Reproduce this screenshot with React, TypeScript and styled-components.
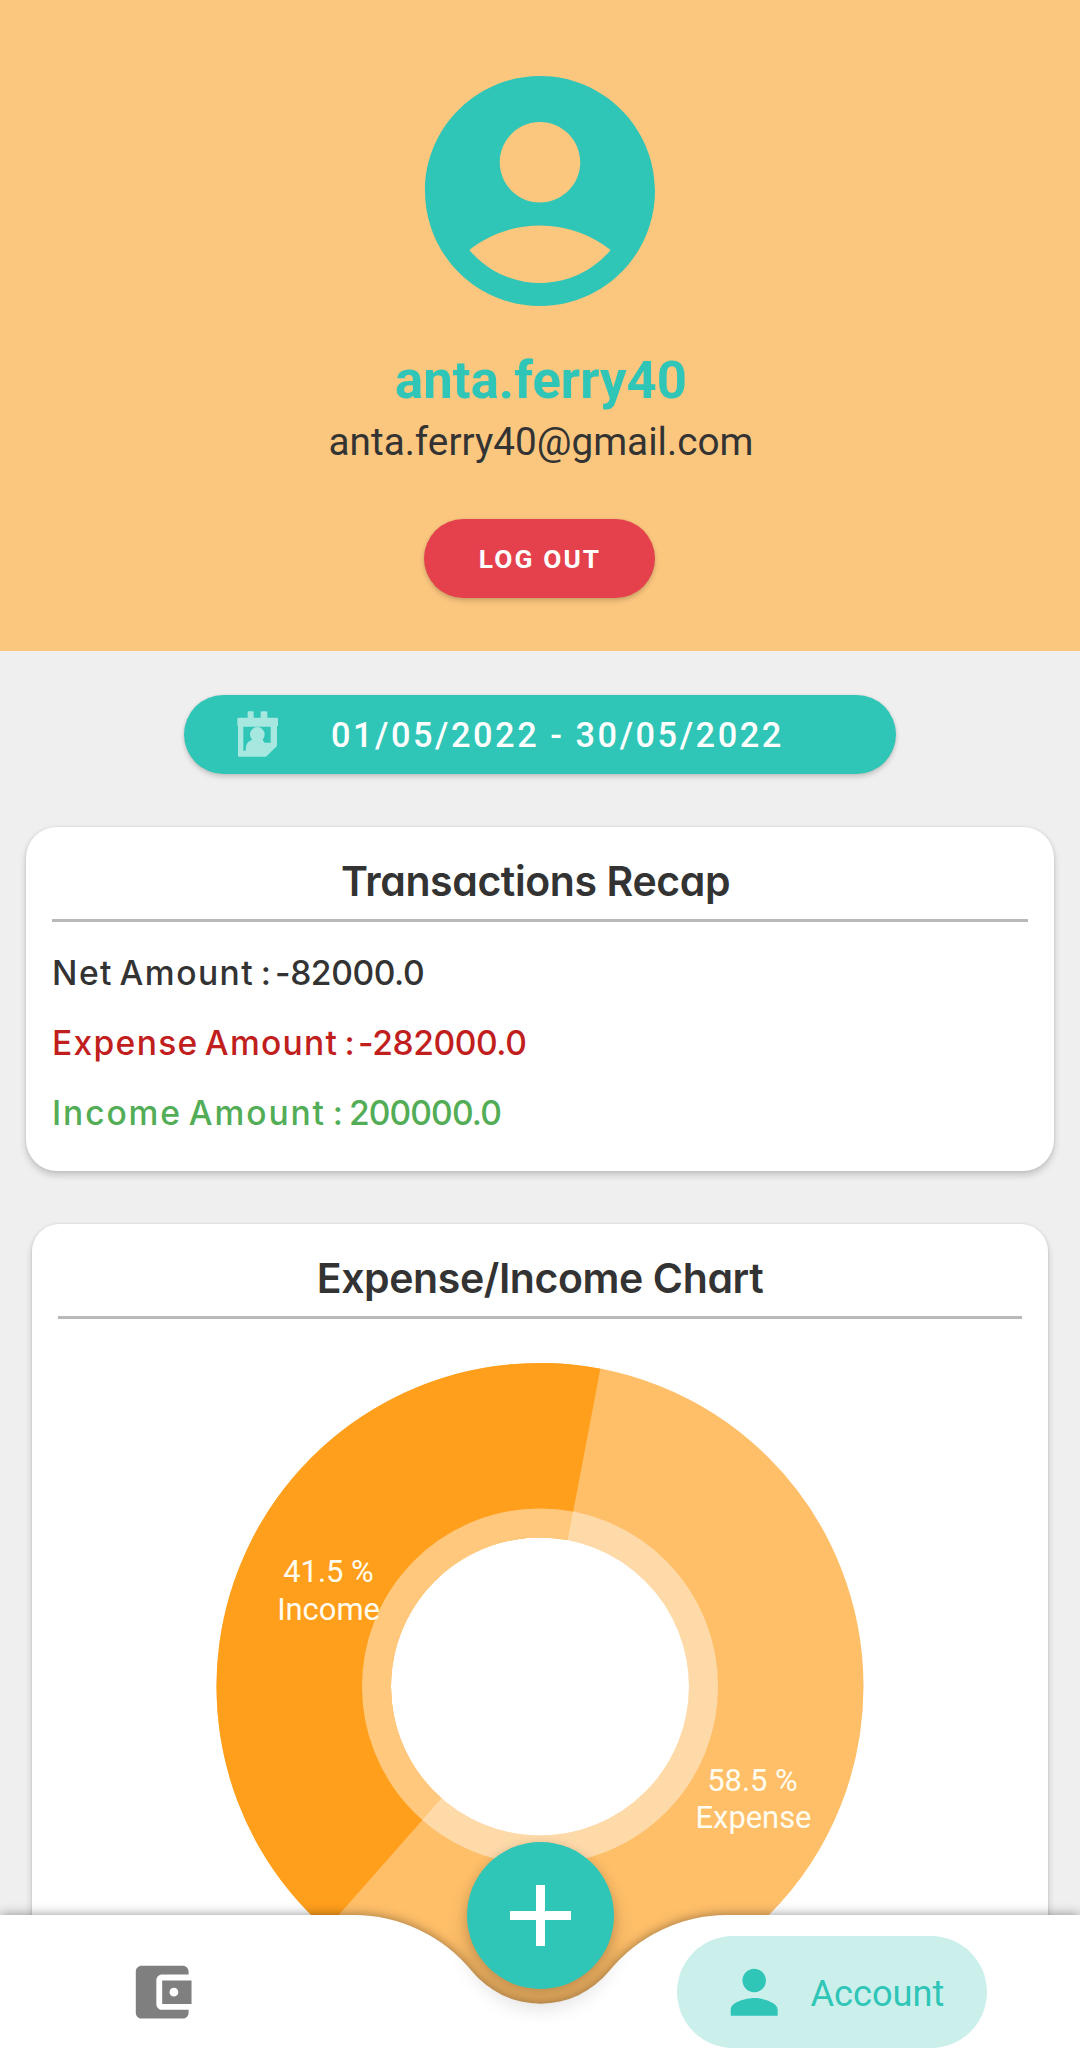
import React from "react";
import styled, { createGlobalStyle } from "styled-components";

const teal = "#2fc5b7";
const ink = "#333333";

const GlobalStyle = createGlobalStyle`
  html, body { margin: 0; padding: 0; }
  body { background: #efefef; font-family: Roboto, "Liberation Sans", sans-serif; }
`;

const Screen = styled.div`
  position: relative;
  display: flex;
  flex-direction: column;
  align-items: center;
  width: 1080px;
  height: 2069px;
  overflow: hidden;
  background: #efefef;
`;

const Header = styled.header`
  display: flex;
  flex-direction: column;
  align-items: center;
  flex: none;
  box-sizing: border-box;
  width: 100%;
  height: 651px;
  padding-top: 53px;
  background: #fbc77f;
`;

const Avatar = styled.svg`
  width: 276px;
  height: 276px;
  fill: ${teal};
`;

const UserName = styled.h1`
  margin: 20px 0 0;
  padding-left: 2px;
  font-size: 52.7px;
  line-height: 62px;
  font-weight: 700;
  color: ${teal};
`;

const Email = styled.p`
  margin: 8px 0 0;
  padding-left: 2px;
  font-size: 38.7px;
  line-height: 46px;
  color: ${ink};
`;

const PillButton = styled.button`
  display: flex;
  align-items: center;
  justify-content: center;
  flex: none;
  box-sizing: border-box;
  border: 0;
  height: 79px;
  border-radius: 40px;
  color: #fff;
  font-family: inherit;
  box-shadow: 0 3px 5px rgba(0, 0, 0, 0.17), 0 0 3px rgba(0, 0, 0, 0.08);
`;

const LogoutButton = styled(PillButton)`
  width: 231px;
  margin: 54px 1px 0 0;
  padding-left: 7px;
  background: #e5414d;
  font-size: 26.3px;
  font-weight: 700;
  letter-spacing: 2.1px;
`;

const DateButton = styled(PillButton)`
  justify-content: flex-start;
  width: 712px;
  margin-top: 44px;
  padding-left: 53px;
  gap: 52px;
  background: ${teal};
  font-size: 34.3px;
  font-weight: 500;
  letter-spacing: 2.55px;
`;

const CalendarIcon = styled.svg`
  width: 42px;
  height: 48px;
  margin-bottom: 2px;
  fill: #a6e8e0;
`;

const Card = styled.section<{ $width: number; $height: number; $gap: number; $radius: number }>`
  flex: none;
  box-sizing: border-box;
  width: ${(p) => p.$width}px;
  height: ${(p) => p.$height}px;
  margin-top: ${(p) => p.$gap}px;
  padding: 0 26px;
  border-radius: ${(p) => p.$radius}px;
  background: #fff;
  color: ${ink};
  font-family: Inter, Roboto, sans-serif;
  font-feature-settings: "cv11";
  box-shadow: 0 4px 7px rgba(0, 0, 0, 0.19), 0 0 3px rgba(0, 0, 0, 0.09);
`;

const CardTitle = styled.h2<{ $shift: number }>`
  box-sizing: border-box;
  height: 95px;
  margin: 0;
  padding-top: 29px;
  padding-right: ${(p) => p.$shift}px;
  border-bottom: 3px solid #b9b9b9;
  font-size: 41px;
  line-height: 50px;
  font-weight: 600;
  letter-spacing: -0.4px;
  text-align: center;
`;

const AmountList = styled.div`
  display: flex;
  flex-direction: column;
  padding-top: 16px;
`;

const Amount = styled.div<{ $color: string }>`
  display: flex;
  font-size: 33.6px;
  line-height: 70px;
  font-weight: 500;
  white-space: nowrap;
  color: ${(p) => p.$color};
`;

const AmountLabel = styled.span<{ $width: number; $tracking: number }>`
  width: ${(p) => p.$width}px;
  letter-spacing: ${(p) => p.$tracking}px;
  word-spacing: -4px;
`;

const AmountValue = styled.span<{ $tracking: number }>`
  letter-spacing: ${(p) => p.$tracking}px;
`;

const Donut = styled.svg`
  display: block;
  width: 648px;
  height: 648px;
  margin: 43px auto 0;
  font-family: Roboto, sans-serif;
  font-size: 30.9px;
  font-feature-settings: normal;
  fill: #fffdf0;
`;

const BottomBar = styled.nav`
  position: absolute;
  left: 0;
  right: 0;
  bottom: 0;
  height: 154px;
`;

const BarShadow = styled.div`
  position: absolute;
  inset: 0;
  filter: drop-shadow(0 0 6px rgba(0, 0, 0, 0.42));
`;

const BarShape = styled.div`
  height: 100%;
  background: #fff;
  clip-path: path("M0 0H353A153 153 0 0 1 472 56.2A88.5 88.5 0 0 0 609 56.2A153 153 0 0 1 728 0H1080V154H0Z");
`;

const BarItems = styled.div`
  position: relative;
  display: flex;
  align-items: center;
  justify-content: space-between;
  box-sizing: border-box;
  height: 100%;
  padding: 0 93px 0 127px;
`;

const NavIcon = styled.svg<{ $color: string }>`
  width: 70.4px;
  height: 70.4px;
  fill: ${(p) => p.$color};
`;

const ActiveTab = styled.div`
  display: flex;
  align-items: center;
  box-sizing: border-box;
  width: 310px;
  height: 112px;
  padding-left: 42px;
  gap: 21px;
  border-radius: 56px;
  background: #cbf0ec;
  color: ${teal};
  font-size: 36.2px;
`;

const TabLabel = styled.span`
  padding-top: 2px;
`;

const AddButton = styled.button`
  position: absolute;
  left: 467px;
  top: -73px;
  display: flex;
  align-items: center;
  justify-content: center;
  width: 147px;
  height: 147px;
  padding: 0;
  border: 0;
  border-radius: 50%;
  background: ${teal};
  box-shadow: 0 16px 22px rgba(0, 0, 0, 0.16), 0 2px 12px rgba(0, 0, 0, 0.14);
`;

const C = 324;
const OUTER = 323.5;
const RING = 178;
const HOLE = 149;
const EXPENSE_START = 10.75;
const EXPENSE_END = EXPENSE_START + 210.62;

function at(angle: number, radius: number) {
  const rad = (angle * Math.PI) / 180;
  return `${(C + radius * Math.sin(rad)).toFixed(2)} ${(C - radius * Math.cos(rad)).toFixed(2)}`;
}

function slice(from: number, to: number, outer: number, inner: number) {
  const large = to - from > 180 ? 1 : 0;
  return `M${at(from, outer)}A${outer} ${outer} 0 ${large} 1 ${at(to, outer)}L${at(to, inner)}A${inner} ${inner} 0 ${large} 0 ${at(from, inner)}Z`;
}

function DonutChart() {
  return (
    <Donut viewBox="0 -0.5 648 648">
      <circle cx={C} cy={C} r={(OUTER + HOLE) / 2} fill="none" stroke="#ffbf69" strokeWidth={OUTER - HOLE} />
      <path fill="#ff9f1c" d={slice(EXPENSE_END, EXPENSE_START + 360, OUTER, HOLE)} />
      <circle cx={C} cy={C} r={(RING + HOLE) / 2} fill="none" stroke="#fff" strokeOpacity="0.43" strokeWidth={RING - HOLE} />
      <g textAnchor="middle">
        <text x="112.5" y="219.5">41.5 %</text>
        <text x="112.5" y="257.5">Income</text>
        <text x="536.5" y="428">58.5 %</text>
        <text x="537.5" y="465.5">Expense</text>
      </g>
    </Donut>
  );
}

export default function App() {
  return (
    <>
      <GlobalStyle />
      <Screen>
        <Header>
          <Avatar viewBox="0 0 24 24">
            <path d="M12 2C6.48 2 2 6.48 2 12s4.48 10 10 10 10-4.48 10-10S17.52 2 12 2zM12 6c1.93 0 3.5 1.57 3.5 3.5S13.93 13 12 13s-3.5-1.57-3.5-3.5S10.07 6 12 6zM12 20c-2.03 0-4.43-.82-6.14-2.88C7.55 15.8 9.68 15 12 15s4.45.8 6.14 2.12C16.43 19.18 14.03 20 12 20z" />
          </Avatar>
          <UserName>anta.ferry40</UserName>
          <Email>anta.ferry40@gmail.com</Email>
          <LogoutButton>LOG OUT</LogoutButton>
        </Header>

        <DateButton>
          <CalendarIcon viewBox="36 30 126 144">
            <path fillRule="evenodd" d="M68 53V37q0-3 3-3h12q3 0 3 3v16h21V37q0-3 3-3h14q3 0 3 3v16h29q3 0 3 3v22h-3v60l-33 32H42q-3 0-3-3V78h-2V56q0-3 3-3zM55 80v72h82V80z" />
            <path d="M75 103a22 22 0 0 1 44 0q0 10-6 17l6 8h19v25H62q0-23 11-29l8-5q-6-7-6-16z" />
          </CalendarIcon>
          01/05/2022 - 30/05/2022
        </DateButton>

        <Card $width={1028} $height={344} $gap={53} $radius={31}>
          <CardTitle $shift={9}>Transactions Recap</CardTitle>
          <AmountList>
            <Amount $color={ink}>
              <AmountLabel $width={223} $tracking={1.5}>Net Amount :</AmountLabel>
              <AmountValue $tracking={-0.4}>-82000.0</AmountValue>
            </Amount>
            <Amount $color="#c11e1e">
              <AmountLabel $width={306} $tracking={1.3}>Expense Amount :</AmountLabel>
              <AmountValue $tracking={-0.4}>-282000.0</AmountValue>
            </Amount>
            <Amount $color="#52ad56">
              <AmountLabel $width={297} $tracking={1.9}>Income Amount :</AmountLabel>
              <AmountValue $tracking={-0.9}>200000.0</AmountValue>
            </Amount>
          </AmountList>
        </Card>

        <Card $width={1016} $height={900} $gap={53} $radius={27}>
          <CardTitle $shift={0}>Expense/Income Chart</CardTitle>
          <DonutChart />
        </Card>

        <BottomBar>
          <BarShadow>
            <BarShape />
          </BarShadow>
          <BarItems>
            <NavIcon $color="#7f7f7f" viewBox="0 0 24 24">
              <path d="M21 18v1c0 1.1-.9 2-2 2H5c-1.11 0-2-.9-2-2V5c0-1.1.89-2 2-2h14c1.1 0 2 .9 2 2v1h-9c-1.11 0-2 .9-2 2v8c0 1.1.89 2 2 2h9zm-9-2h10V8H12v8zm4-2.5c-.83 0-1.5-.67-1.5-1.5s.67-1.5 1.5-1.5 1.5.67 1.5 1.5-.67 1.5-1.5 1.5z" />
            </NavIcon>
            <ActiveTab>
              <NavIcon $color={teal} viewBox="0 0 24 24">
                <path d="M12 12c2.21 0 4-1.79 4-4s-1.79-4-4-4-4 1.79-4 4 1.79 4 4 4zm0 2c-2.67 0-8 1.34-8 4v2h16v-2c0-2.66-5.33-4-8-4z" />
              </NavIcon>
              <TabLabel>Account</TabLabel>
            </ActiveTab>
          </BarItems>
          <AddButton aria-label="Add">
            <svg width="61" height="61" viewBox="0 0 61 61" fill="#fff">
              <path d="M26 0h9v26h26v9H35v26h-9V35H0v-9h26z" />
            </svg>
          </AddButton>
        </BottomBar>
      </Screen>
    </>
  );
}
